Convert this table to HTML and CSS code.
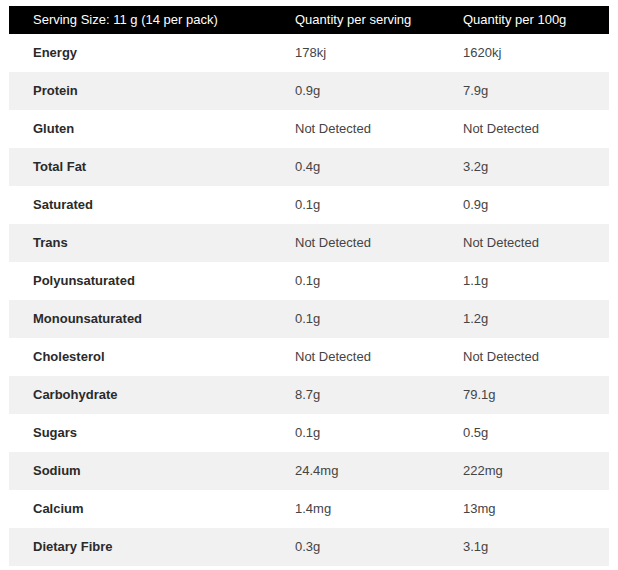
FILE: index.html
```html
<!DOCTYPE html>
<html>
<head>
<meta charset="utf-8">
<link rel="stylesheet" href="styles.css">
</head>
<body>
<table class="nutrition">
  <colgroup>
    <col class="c1"><col class="c2"><col class="c3">
  </colgroup>
  <thead>
    <tr><th>Serving Size: 11 g (14 per pack)</th><th>Quantity per serving</th><th>Quantity per 100g</th></tr>
  </thead>
  <tbody>
    <tr><td>Energy</td><td>178kj</td><td>1620kj</td></tr>
    <tr><td>Protein</td><td>0.9g</td><td>7.9g</td></tr>
    <tr><td>Gluten</td><td>Not Detected</td><td>Not Detected</td></tr>
    <tr><td>Total Fat</td><td>0.4g</td><td>3.2g</td></tr>
    <tr><td>Saturated</td><td>0.1g</td><td>0.9g</td></tr>
    <tr><td>Trans</td><td>Not Detected</td><td>Not Detected</td></tr>
    <tr><td>Polyunsaturated</td><td>0.1g</td><td>1.1g</td></tr>
    <tr><td>Monounsaturated</td><td>0.1g</td><td>1.2g</td></tr>
    <tr><td>Cholesterol</td><td>Not Detected</td><td>Not Detected</td></tr>
    <tr><td>Carbohydrate</td><td>8.7g</td><td>79.1g</td></tr>
    <tr><td>Sugars</td><td>0.1g</td><td>0.5g</td></tr>
    <tr><td>Sodium</td><td>24.4mg</td><td>222mg</td></tr>
    <tr><td>Calcium</td><td>1.4mg</td><td>13mg</td></tr>
    <tr><td>Dietary Fibre</td><td>0.3g</td><td>3.1g</td></tr>
  </tbody>
</table>
</body>
</html>
```

FILE: styles.css
```css
html, body {
  margin: 0;
  padding: 0;
  background: #fff;
}
body {
  padding: 6px 9px;
  font-family: "Liberation Sans", Arial, sans-serif;
  font-size: 13px;
}
.nutrition {
  width: 600px;
  table-layout: fixed;
  border-collapse: collapse;
  border-spacing: 0;
}
.c1 { width: 262px; }
.c2 { width: 168px; }
.c3 { width: 170px; }
.nutrition th {
  background: #000;
  color: #fff;
  font-weight: normal;
  text-align: left;
  height: 26px;
  padding: 0 0 2px 24px;
  vertical-align: middle;
}
.nutrition td {
  height: 36px;
  padding: 0 0 2px 24px;
  vertical-align: middle;
  color: #444;
}
.nutrition td:first-child {
  color: #2a2a2a;
  font-weight: bold;
}
.nutrition tbody tr:nth-child(even) td {
  background: #f1f1f1;
}
```
